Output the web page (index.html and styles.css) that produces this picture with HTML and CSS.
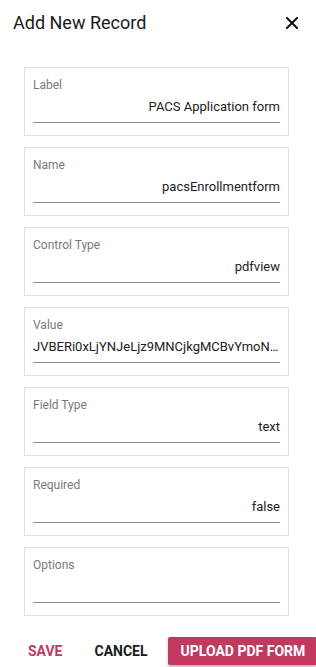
FILE: index.html
```html
<!DOCTYPE html>
<html lang="en">
<head>
    <meta charset="UTF-8">
    <meta name="viewport" content="width=device-width, initial-scale=1.0">
    <title>Add New Record</title>
    <link rel="stylesheet" href="styles.css">
</head>
<body>
    <div class="dialog">
        <div class="dialog-header">
            <h2>Add New Record</h2>
            <button class="close" aria-label="Close">
                <svg width="12" height="12" viewBox="0 0 12 12">
                    <path d="M1 1 L11 11 M11 1 L1 11" stroke="#111" stroke-width="2" stroke-linecap="square"/>
                </svg>
            </button>
        </div>

        <div class="fields">
            <div class="field">
                <div class="field-label">Label</div>
                <div class="field-value">PACS Application form</div>
            </div>
            <div class="field">
                <div class="field-label">Name</div>
                <div class="field-value">pacsEnrollmentform</div>
            </div>
            <div class="field">
                <div class="field-label">Control Type</div>
                <div class="field-value">pdfview</div>
            </div>
            <div class="field">
                <div class="field-label">Value</div>
                <div class="field-value left">JVBERi0xLjYNJeLjz9MNCjkgMCBvYmoNCjw8L0xpbmVhcml6ZWQgMS9MIDM0NTY3</div>
            </div>
            <div class="field">
                <div class="field-label">Field Type</div>
                <div class="field-value">text</div>
            </div>
            <div class="field">
                <div class="field-label">Required</div>
                <div class="field-value">false</div>
            </div>
            <div class="field">
                <div class="field-label">Options</div>
                <div class="field-value"></div>
            </div>
        </div>

        <div class="actions">
            <button class="btn text primary">Save</button>
            <button class="btn text">Cancel</button>
            <button class="btn raised">Upload PDF Form</button>
        </div>
    </div>
</body>
</html>
```

FILE: styles.css
```css
body {
    margin: 0;
    background: white;
    font-family: Roboto, "Noto Sans", sans-serif;
    color: #212121;
}
.dialog {
    width: 316px;
    height: 667px;
    overflow: hidden;
}
.dialog-header {
    display: flex;
    align-items: center;
    justify-content: space-between;
    height: 45px;
    padding: 0 18px 0 13px;
}
.dialog-header h2 {
    margin: 0;
    font-size: 18px;
    font-weight: 400;
    color: #1a1a1a;
}
.close {
    background: none;
    border: none;
    padding: 0;
    width: 12px;
    height: 12px;
    display: flex;
    cursor: pointer;
}
.fields {
    display: flex;
    flex-direction: column;
    gap: 11px;
    margin: 22px 0 0 24px;
    width: 265px;
}
.field {
    border: 1px solid #e0e0e0;
    padding: 9px 8px 12px;
}
.field-label {
    font-size: 12px;
    line-height: 16px;
    color: #7a7a7a;
}
.field-value {
    margin-top: 4px;
    padding-bottom: 5px;
    height: 20px;
    font-size: 13px;
    line-height: 20px;
    text-align: right;
    color: #212121;
    border-bottom: 1px solid #8c8c8c;
    white-space: nowrap;
    overflow: hidden;
    text-overflow: ellipsis;
}
.field-value.left {
    text-align: left;
}
.actions {
    display: flex;
    align-items: center;
    margin-top: 21px;
}
.btn {
    font-family: Roboto, "Noto Sans", sans-serif;
    font-size: 14px;
    font-weight: 700;
    text-transform: uppercase;
    border: none;
    background: none;
    height: 28px;
    padding: 0 13px;
    cursor: pointer;
    color: #1a1a1a;
}
.btn.text {
    margin-left: 32px;
    padding: 0;
}
.btn.text.primary {
    color: #c2395f;
    margin-left: 28px;
}
.btn.raised {
    margin-left: 20px;
    background: #c2395f;
    color: white;
    border-radius: 2px;
    box-shadow: 0 2px 3px rgba(0,0,0,0.3);
    width: 149px;
    flex-shrink: 0;
    white-space: nowrap;
}
```
